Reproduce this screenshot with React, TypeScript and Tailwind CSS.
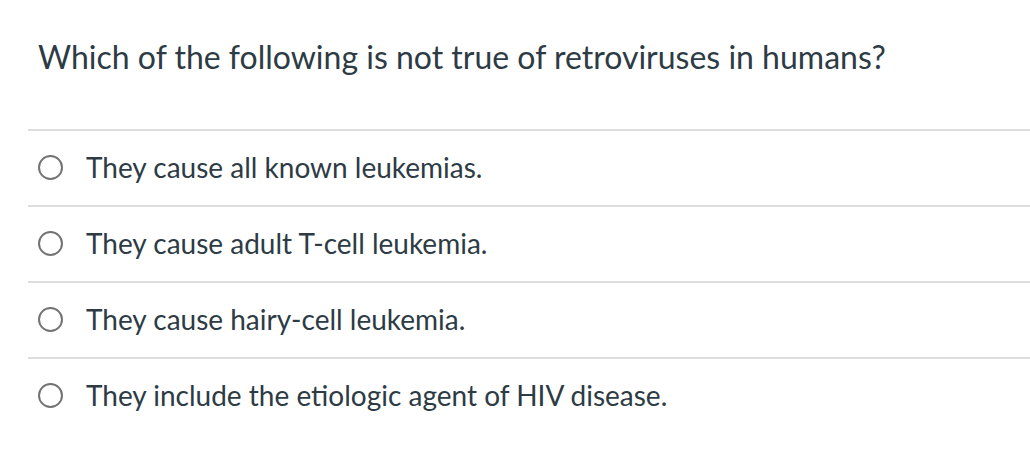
const options = [
  "They cause all known leukemias.",
  "They cause adult T-cell leukemia.",
  "They cause hairy-cell leukemia.",
  "They include the etiologic agent of HIV disease.",
];

const App = () => {
  return (
    <div className="min-h-[462px] bg-white pl-[28px] font-['Lato','Liberation_Sans',sans-serif] text-[#2d3b45]">
      <div className="flex h-[129px] items-center pl-[10px] pb-[16px]">
        <p className="text-[32px] leading-none">
          Which of the following is not true of retroviruses in humans?
        </p>
      </div>

      {options.map((text) => (
        <label
          key={text}
          className="flex h-[76px] items-center border-t-2 border-[#dddddd] pb-[2px]"
        >
          <span className="ml-[10px] h-[25px] w-[25px] shrink-0 rounded-full border-2 border-[#737373] bg-white" />
          <span className="ml-[23px] text-[28px] leading-none">{text}</span>
        </label>
      ))}
    </div>
  );
};

export default App;
